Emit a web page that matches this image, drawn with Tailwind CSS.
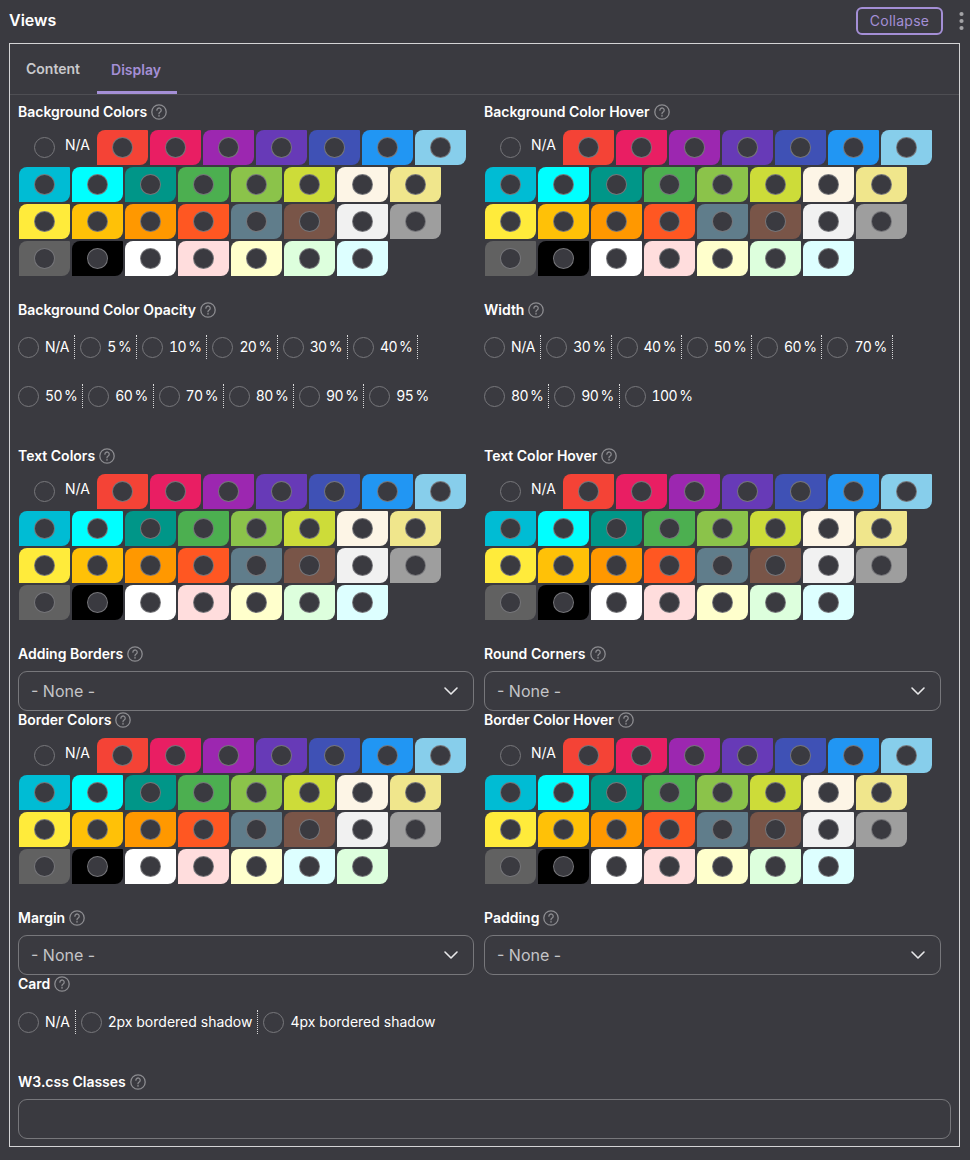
<!DOCTYPE html>
<html lang="en">
<head>
<meta charset="utf-8">
<title>Views</title>
<script src="https://cdn.jsdelivr.net/npm/@tailwindcss/browser@4"></script>
</head>
<body class="bg-[#3a3a40] font-['Inter','Liberation_Sans',sans-serif] text-white">
<svg class="hidden"><defs><symbol id="help" viewBox="0 0 16 16"><circle cx="8" cy="8" r="7.2" fill="none" stroke="currentColor" stroke-width="1.3"/><path d="M5.9 6.2a2.15 2.15 0 1 1 3.3 1.8c-.8.5-1.2.9-1.2 1.8" fill="none" stroke="currentColor" stroke-width="1.3" stroke-linecap="round"/><circle cx="8" cy="11.9" r=".8" fill="currentColor"/></symbol><symbol id="chev" viewBox="0 0 16 16"><path d="M2 5l6 6 6-6" fill="none" stroke="currentColor" stroke-width="1.6" stroke-linecap="round" stroke-linejoin="round"/></symbol></defs></svg>
<div class="flex h-[43px] items-center justify-between pb-[1px] pl-[9px] pr-[6px]">
  <h1 class="mb-[2px] text-base leading-none font-semibold">Views</h1>
  <div class="flex items-center gap-[16px]">
    <button class="flex h-[28px] w-[87px] items-center justify-center rounded-md border-2 border-[#a48fd6] text-sm tracking-[0.25px] text-[#a48fd6]">Collapse</button>
    <svg class="h-[20px] w-[5px]" viewBox="0 0 5 20"><circle cx="2.5" cy="3" r="2.1" fill="#a3a3a6"/><circle cx="2.5" cy="10" r="2.1" fill="#a3a3a6"/><circle cx="2.5" cy="17" r="2.1" fill="#a3a3a6"/></svg>
  </div>
</div>
<main class="mx-[9px] w-[951px] border border-[#d4d4d6] pb-[7px]">
  <div class="flex h-[51px] items-end border-b border-white/10 pl-[16px] text-sm font-semibold">
    <div class="flex h-[44px] items-start pt-[9px] text-[#c9c9cc]">Content</div>
    <div class="ml-[17px] flex h-[44px] w-[80px] justify-center border-b-[3px] border-[#a48fd6] pr-[2px] pt-[10px] text-[#a48fd6]">Display</div>
  </div>
  <div class="grid grid-cols-[456px_467px] gap-x-[10px] pl-[8px] pt-[8px]">

    <section class="mb-[25px]"><h2 class="flex h-[18px] items-center gap-[4px] text-sm font-semibold">Background Colors <svg class="size-[16px] text-[#8c8c90]"><use href="#help"/></svg></h2><div data-palette="std" class="mt-[9px]"></div></section>
    <section class="mb-[25px]"><h2 class="flex h-[18px] items-center gap-[4px] text-sm font-semibold">Background Color Hover <svg class="size-[16px] text-[#8c8c90]"><use href="#help"/></svg></h2><div data-palette="std" class="mt-[9px]"></div></section>

    <section class="mb-[39px]"><h2 class="flex h-[18px] items-center gap-[4px] text-sm font-semibold">Background Color Opacity <svg class="size-[16px] text-[#8c8c90]"><use href="#help"/></svg></h2><div data-radios="N/A|5 %|10 %|20 %|30 %|40 %|50 %|60 %|70 %|80 %|90 %|95 %" class="mt-[16px] flex flex-wrap gap-y-[25px] tabular-nums tracking-[-0.6px] [word-spacing:-1px]"></div></section>
    <section class="mb-[39px]"><h2 class="flex h-[18px] items-center gap-[4px] text-sm font-semibold">Width <svg class="size-[16px] text-[#8c8c90]"><use href="#help"/></svg></h2><div data-radios="N/A|30 %|40 %|50 %|60 %|70 %|80 %|90 %|100 %" class="mt-[16px] flex flex-wrap gap-y-[25px] tabular-nums tracking-[-0.6px] [word-spacing:-1px]"></div></section>

    <section class="mb-[25px]"><h2 class="flex h-[18px] items-center gap-[4px] text-sm font-semibold">Text Colors <svg class="size-[16px] text-[#8c8c90]"><use href="#help"/></svg></h2><div data-palette="std" class="mt-[9px]"></div></section>
    <section class="mb-[25px]"><h2 class="flex h-[18px] items-center gap-[4px] text-sm font-semibold">Text Color Hover <svg class="size-[16px] text-[#8c8c90]"><use href="#help"/></svg></h2><div data-palette="std" class="mt-[9px]"></div></section>

    <section><h2 class="flex h-[18px] items-center gap-[4px] text-sm font-semibold">Adding Borders <svg class="size-[16px] text-[#8c8c90]"><use href="#help"/></svg></h2><div class="mt-[8px] flex h-[40px] w-[456px] items-center justify-between rounded-[9px] border border-[#77777b] pl-[12px] pr-[14px] text-base text-[#c4c4c7]">- None - <svg class="size-[16px] text-[#e8e8ea]"><use href="#chev"/></svg></div></section>
    <section><h2 class="flex h-[18px] items-center gap-[4px] text-sm font-semibold">Round Corners <svg class="size-[16px] text-[#8c8c90]"><use href="#help"/></svg></h2><div class="mt-[8px] flex h-[40px] w-[457px] items-center justify-between rounded-[9px] border border-[#77777b] pl-[12px] pr-[14px] text-base text-[#c4c4c7]">- None - <svg class="size-[16px] text-[#e8e8ea]"><use href="#chev"/></svg></div></section>

    <section class="mb-[25px]"><h2 class="flex h-[18px] items-center gap-[4px] text-sm font-semibold">Border Colors <svg class="size-[16px] text-[#8c8c90]"><use href="#help"/></svg></h2><div data-palette="swap" class="mt-[9px]"></div></section>
    <section class="mb-[25px]"><h2 class="flex h-[18px] items-center gap-[4px] text-sm font-semibold">Border Color Hover <svg class="size-[16px] text-[#8c8c90]"><use href="#help"/></svg></h2><div data-palette="std" class="mt-[9px]"></div></section>

    <section><h2 class="flex h-[18px] items-center gap-[4px] text-sm font-semibold">Margin <svg class="size-[16px] text-[#8c8c90]"><use href="#help"/></svg></h2><div class="mt-[8px] flex h-[40px] w-[456px] items-center justify-between rounded-[9px] border border-[#77777b] pl-[12px] pr-[14px] text-base text-[#c4c4c7]">- None - <svg class="size-[16px] text-[#e8e8ea]"><use href="#chev"/></svg></div></section>
    <section><h2 class="flex h-[18px] items-center gap-[4px] text-sm font-semibold">Padding <svg class="size-[16px] text-[#8c8c90]"><use href="#help"/></svg></h2><div class="mt-[8px] flex h-[40px] w-[457px] items-center justify-between rounded-[9px] border border-[#77777b] pl-[12px] pr-[14px] text-base text-[#c4c4c7]">- None - <svg class="size-[16px] text-[#e8e8ea]"><use href="#chev"/></svg></div></section>

    <section class="col-span-2 mb-[39px]"><h2 class="flex h-[18px] items-center gap-[4px] text-sm font-semibold">Card <svg class="size-[16px] text-[#8c8c90]"><use href="#help"/></svg></h2><div data-radios="N/A|2px bordered shadow|4px bordered shadow" class="mt-[17px] flex flex-wrap gap-y-[25px]"></div></section>

    <section class="col-span-2"><h2 class="flex h-[18px] items-center gap-[4px] text-sm font-semibold">W3.css Classes <svg class="size-[16px] text-[#8c8c90]"><use href="#help"/></svg></h2><div class="mt-[8px] h-[40px] w-[933px] rounded-[9px] border border-[#77777b]"></div></section>
  </div>
</main>
<script>
const std = ['bg-[#f44336]','bg-[#e91e63]','bg-[#9c27b0]','bg-[#673ab7]','bg-[#3f51b5]','bg-[#2196f3]','bg-[#87ceeb]','bg-[#00bcd4]','bg-[#00ffff]','bg-[#009688]','bg-[#4caf50]','bg-[#8bc34a]','bg-[#cddc39]','bg-[#fdf5e6]','bg-[#f0e68c]','bg-[#ffeb3b]','bg-[#ffc107]','bg-[#ff9800]','bg-[#ff5722]','bg-[#607d8b]','bg-[#795548]','bg-[#f1f1f1]','bg-[#9e9e9e]','bg-[#616161]','bg-[#000000]','bg-[#ffffff]','bg-[#ffdddd]','bg-[#ffffcc]','bg-[#ddffdd]','bg-[#ddffff]'];
const swap = [...std.slice(0, 28), 'bg-[#ddffff]', 'bg-[#ddffdd]'];
const swatch = c => `<span class="flex h-[35px] w-[51px] items-center justify-center rounded-tl-lg rounded-br-lg rounded-tr-[1px] ${c}"><span class="block size-[21px] rounded-full border border-white/30 bg-[#3a3a40]"></span></span>`;
document.querySelectorAll('[data-palette]').forEach(el => {
  el.className += ' flex w-[450px] flex-wrap gap-[2px] pl-[1px]';
  const list = el.dataset.palette === 'swap' ? swap : std;
  el.innerHTML = `<span class="flex h-[35px] w-[76px] items-center pl-[15px] text-sm"><span class="mr-[10px] block size-[21px] rounded-full border border-[#77777b]"></span><span class="mb-[5px]">N/A</span></span>` + list.map(swatch).join('');
});
document.querySelectorAll('[data-radios]').forEach(el => {
  const items = el.dataset.radios.split('|');
  const na = el.classList.contains('tabular-nums') ? 'tracking-[-0.2px]' : '';
  el.innerHTML = items.map((t, i) => `<span class="flex h-[24px] items-center pr-[5px] text-sm ${t === 'N/A' ? na : ''} ${i < items.length - 1 ? 'mr-[5px] border-r border-dotted border-white/80' : ''}"><span class="mr-[6px] block size-[21px] rounded-full border border-[#77777b]"></span>${t}</span>`).join('');
});
</script>
</body>
</html>
